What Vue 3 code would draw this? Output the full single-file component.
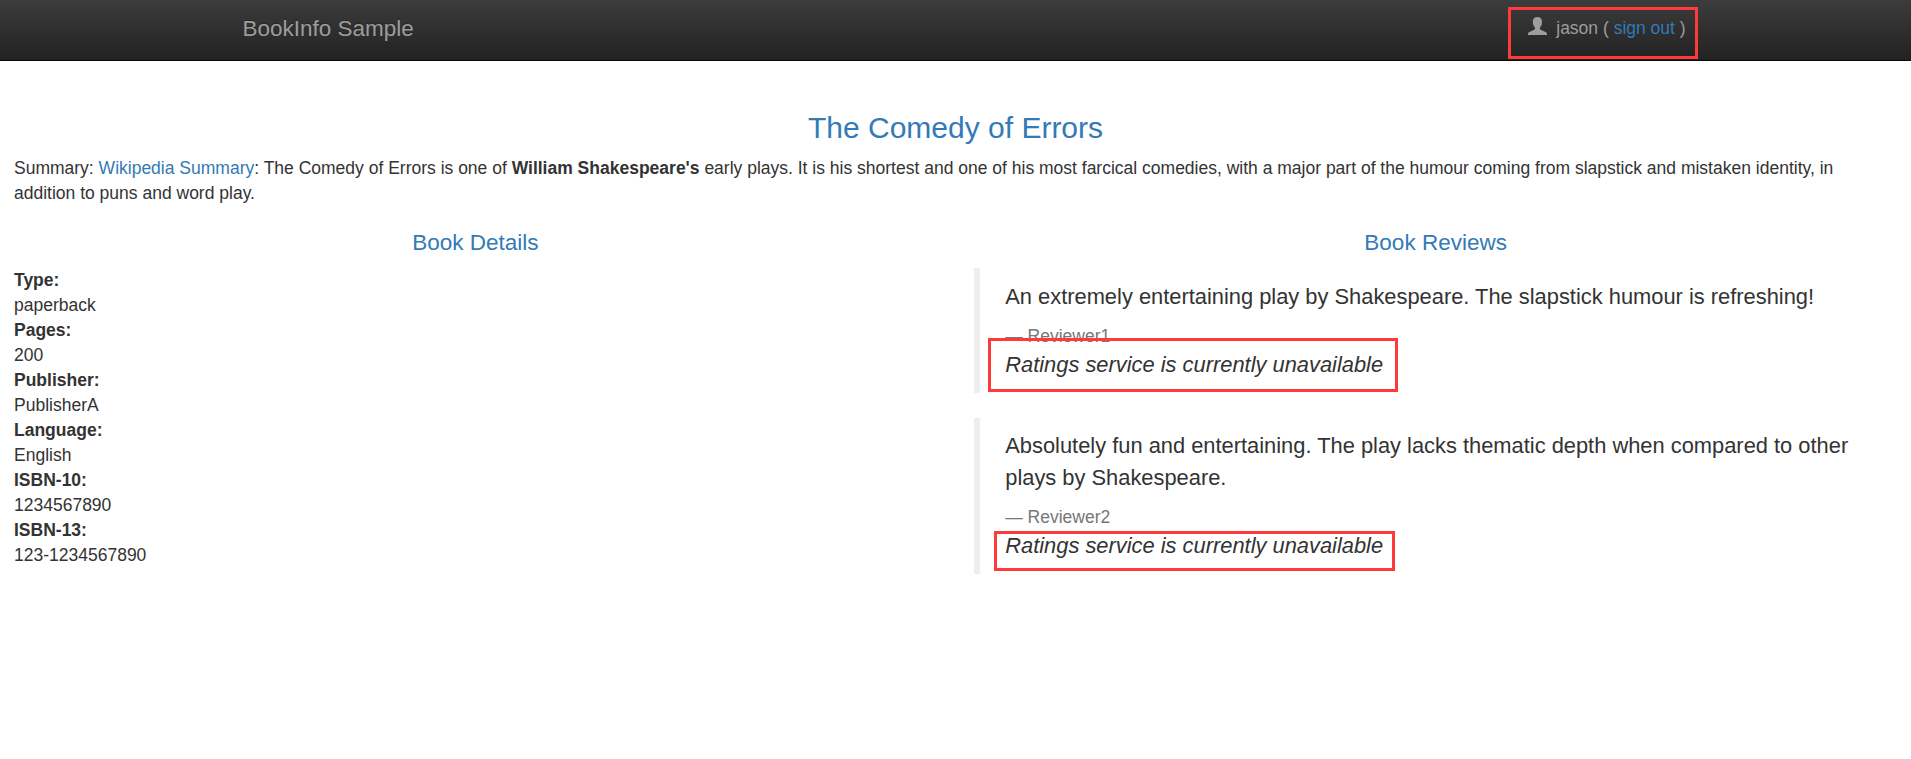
<script setup>
const details = [
  ['Type:', 'paperback'],
  ['Pages:', '200'],
  ['Publisher:', 'PublisherA'],
  ['Language:', 'English'],
  ['ISBN-10:', '1234567890'],
  ['ISBN-13:', '123-1234567890'],
]
const reviews = [
  { text: 'An extremely entertaining play by Shakespeare. The slapstick humour is refreshing!', by: 'Reviewer1', mark: 'mark-first' },
  { text: 'Absolutely fun and entertaining. The play lacks thematic depth when compared to other plays by Shakespeare.', by: 'Reviewer2', mark: 'mark-second' },
]
</script>

<template>
  <div class="page">
    <nav class="navbar">
      <div class="container">
        <a class="brand">BookInfo Sample</a>
        <div class="user">
          <svg class="icon" viewBox="0 0 19 18" width="19" height="18">
            <path d="M9.400 0C6.500 0 4.900 1.700 4.900 4.200c0 1.700.1 3.200.8 4.500.5.9 1.300 1.500 1.300 2.500 0 .8-.5 1.300-1.300 1.700L1.400 14.900C.4 15.400 0 16 0 17v1h19v-1c0-1-.4-1.600-1.400-2.100l-4.400-2c-.8-.4-1.300-.9-1.300-1.700 0-1 .8-1.600 1.300-2.500.7-1.300.8-2.800.8-4.500C14 1.700 12.300 0 9.400 0z" fill="#9d9d9d" />
          </svg>
          <span>jason ( <a class="link">sign out</a> )</span>
          <i class="mark mark-user"></i>
        </div>
      </div>
    </nav>

    <header class="intro">
      <h3 class="title">The Comedy of Errors</h3>
      <p class="summary">Summary: <a class="link">Wikipedia Summary</a>: The Comedy of Errors is one of <b>William Shakespeare's</b> early plays. It is his shortest and one of his most farcical comedies, with a major part of the humour coming from slapstick and mistaken identity, in addition to puns and word play.</p>
    </header>

    <main class="row">
      <section class="details">
        <h4>Book Details</h4>
        <dl>
          <template v-for="d in details" :key="d[0]">
            <dt>{{ d[0] }}</dt>
            <dd>{{ d[1] }}</dd>
          </template>
        </dl>
      </section>
      <section class="reviews">
        <h4>Book Reviews</h4>
        <blockquote v-for="r in reviews" :key="r.by">
          <p>{{ r.text }}</p>
          <small>— {{ r.by }}</small>
          <em>Ratings service is currently unavailable</em>
          <i class="mark" :class="r.mark"></i>
        </blockquote>
      </section>
    </main>
  </div>
</template>

<style>
body { margin: 0; background: #fff; }
</style>

<style scoped>
.page {
  box-sizing: border-box;
  min-height: 759px;
  font-family: "Liberation Sans", Arial, sans-serif;
  font-size: 17.5px;
  line-height: 25px;
  color: #333;
}
.navbar {
  box-sizing: border-box;
  height: 61px;
  background: linear-gradient(#3c3c3c, #222);
  border-bottom: 1px solid #080808;
}
.container {
  box-sizing: border-box;
  width: 1462.5px;
  margin: 0 auto;
  padding-left: 18.25px;
  display: flex;
  justify-content: space-between;
  color: #9d9d9d;
}
.brand {
  font-size: 22.5px;
  padding-top: 15.5px;
  text-shadow: 0 -1px 0 rgba(0, 0, 0, .25);
}
.user {
  position: relative;
  display: flex;
  align-items: flex-start;
  box-sizing: border-box;
  width: 190px;
  padding: 15.5px 0 0 31.5px;
  white-space: nowrap;
}
.icon { flex: none; margin: 1.5px 9px 0 0; }
.link { color: #337ab7; }
.mark {
  position: absolute;
  box-sizing: border-box;
  border: 3px solid #fe3a3a;
  pointer-events: none;
}
.mark-user { left: 11px; top: 7px; width: 190px; height: 52px; }
.intro { padding: 50px 14px 0; }
.title {
  margin: 0 0 12px;
  font-size: 30px;
  line-height: 33px;
  font-weight: 400;
  color: #337ab7;
  text-align: center;
}
.summary { margin: 0; }
.row {
  display: grid;
  grid-template-columns: 955.5px 955.5px;
  padding-top: 25px;
}
.details { padding: 0 18.75px 0 14px; }
.reviews { padding: 0 14px 0 18.75px; }
h4 {
  margin: 0 0 12.5px;
  font-size: 22.5px;
  line-height: 24.75px;
  font-weight: 400;
  color: #337ab7;
  text-align: center;
}
dl, dd { margin: 0; }
dt { font-weight: 700; }
blockquote {
  position: relative;
  margin: 0 0 25px;
  padding: 12.5px 25px;
  border-left: 6px solid #eee;
  font-size: 21.875px;
  line-height: 31.25px;
}
blockquote p { margin: 0 0 12px; }
small {
  display: block;
  font-size: 17.5px;
  line-height: 25px;
  color: #777;
}
em { display: block; }
.mark-first { left: 8px; top: 70px; width: 410px; height: 54px; }
.mark-second { left: 14px; top: 113px; width: 401px; height: 40px; }
</style>
